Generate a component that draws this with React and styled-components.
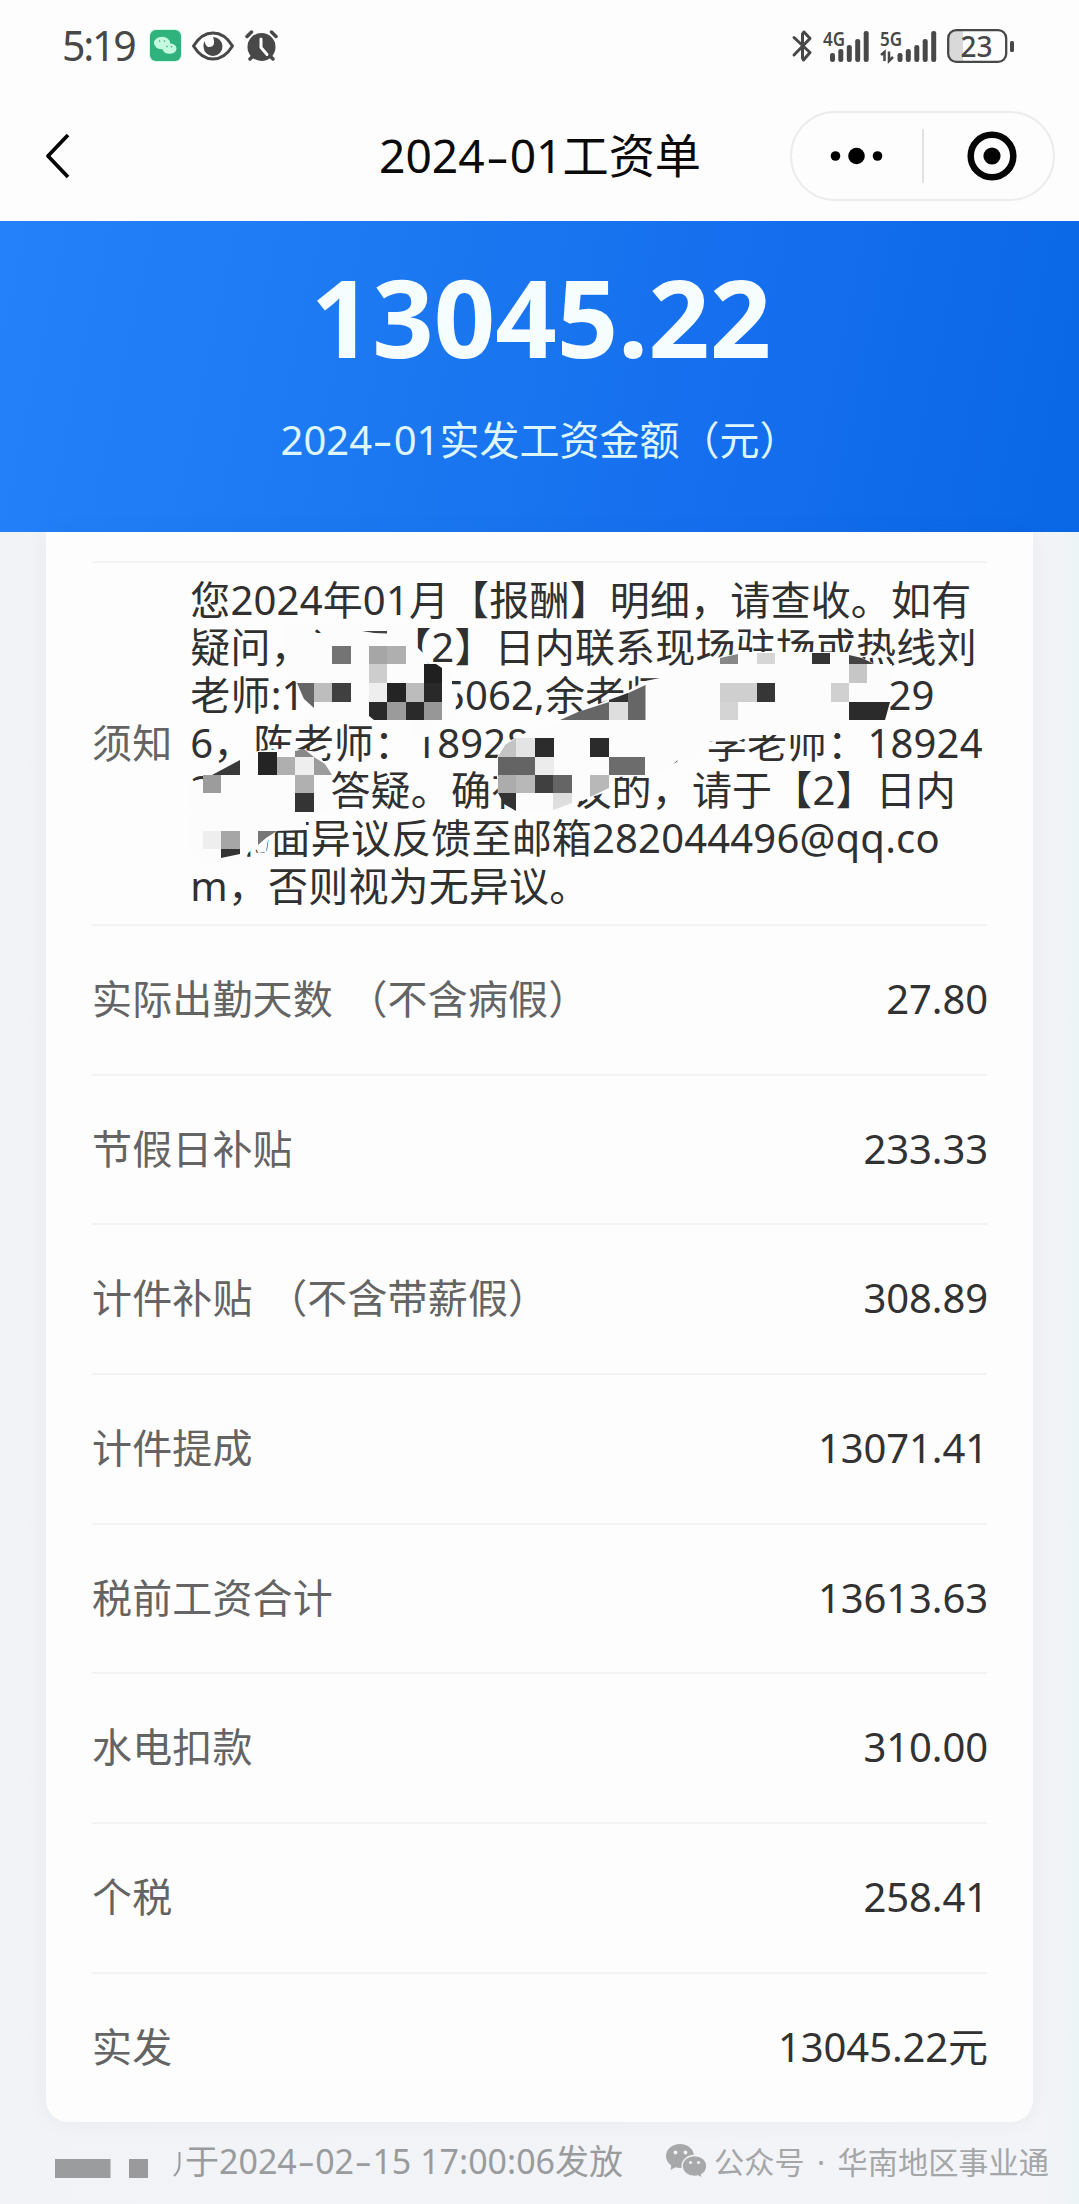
import React from "react";
import styled, { createGlobalStyle } from "styled-components";

const GlobalStyle = createGlobalStyle`
  * { box-sizing: border-box; }
  body {
    margin: 0;
    background: #f2f3f6;
    font-family: "Noto Sans", "Noto Sans CJK SC", sans-serif;
  }
`;

const Page = styled.div`
  width: 1079px;
  height: 2204px;
  overflow: hidden;
  display: flex;
  flex-direction: column;
  background: linear-gradient(90deg, #f1f3f6 0, #f3f4f7 96%, #edf4f5 100%);
`;

const StatusBar = styled.div`
  height: 91px;
  flex: none;
  display: flex;
  justify-content: space-between;
  align-items: center;
  padding: 0 65px 0 62px;
  background: #fdfdfd;
  color: #484848;
`;

const StatusGroup = styled.div`
  display: flex;
  align-items: center;
  gap: ${(p) => p.$gap}px;
`;

const Clock = styled.span`
  width: 77px;
  font-size: 41px;
  line-height: 46px;
  height: 48px;
  letter-spacing: -2.2px;
  white-space: nowrap;
`;

const Icon = styled.svg`
  display: block;
  flex: none;
  overflow: visible;
`;

const NavBar = styled.div`
  height: 130px;
  flex: none;
  display: grid;
  grid-template-columns: 379px 411px 265px;
  align-items: center;
  background: #fdfdfd;
`;

const BackButton = styled.div`
  padding-left: 45px;
`;

const Title = styled.div`
  font-size: 46.2px;
  line-height: 60px;
  color: #0a0a0a;
  white-space: nowrap;
`;

const Capsule = styled.div`
  height: 90px;
  border: 2px solid #ececec;
  border-radius: 45px;
  display: flex;
  align-items: center;
  justify-content: space-between;
  padding: 0 36px 0 37px;
`;

const CapsuleDivider = styled.div`
  width: 2px;
  height: 54px;
  margin-right: 4px;
  background: #e2e2e2;
`;

const DashBox = styled.span`
  display: inline-block;
  width: 0.54em;
  text-align: center;
  transform: scaleX(1.55);
`;

const Hero = styled.div`
  height: 311px;
  flex: none;
  display: flex;
  flex-direction: column;
  align-items: center;
  padding-top: 40px;
  background: linear-gradient(102deg, #2481f9 0%, #1b78f0 38%, #156eee 68%, #0967e6 100%);
`;

const Amount = styled.div`
  font-size: 107.5px;
  line-height: 110px;
  font-weight: 700;
  color: #f6fdff;
  padding-left: 3px;
`;

const AmountLabel = styled.div`
  margin-top: 41px;
  padding-left: 1px;
  font-size: 40px;
  line-height: 56px;
  color: #def6ff;
  white-space: nowrap;
`;

const Card = styled.div`
  width: 987px;
  height: 1590px;
  flex: none;
  margin-left: 46px;
  padding: 29px 46px 0;
  background: #fdfdfd;
  border-radius: 0 0 22px 22px;
  box-shadow: 0 0 22px rgba(60, 60, 70, 0.05);
`;

const Notice = styled.div`
  position: relative;
  height: 363px;
  border-top: 2px solid #f4f4f4;
  display: flex;
  align-items: center;
  padding-bottom: 2px;
`;

const Label = styled.div`
  font-size: 40px;
  line-height: 48px;
  letter-spacing: 0.15px;
  word-spacing: 4px;
  color: #646464;
  white-space: pre;
`;

const NoticeBody = styled.div`
  margin-left: 18px;
  letter-spacing: 0.17px;
  color: #303030;
`;

const Line = styled.div`
  height: 47.7px;
  font-size: 40px;
  line-height: 47.7px;
  white-space: nowrap;
`;

const Gap = styled.span`
  display: inline-block;
  width: ${(p) => p.$w}px;
`;

const Redaction = styled.svg`
  position: absolute;
  left: -92px;
  top: -2px;
  width: 1079px;
  height: 363px;
  pointer-events: none;
`;

const Row = styled.div`
  height: 149.7px;
  border-top: 2px solid #f3f3f3;
  padding-bottom: 2px;
  display: flex;
  align-items: center;
  justify-content: space-between;
`;

const Value = styled.div`
  font-size: 40px;
  line-height: 48px;
  letter-spacing: -0.1px;
  color: #323232;
  margin-right: -1px;
`;

const Footer = styled.div`
  flex: 1;
  display: flex;
  align-items: flex-start;
  padding: 14px 0 0 55px;
`;

const Issued = styled.div`
  width: 438px;
  font-size: 34px;
  line-height: 50px;
  color: #999b9d;
  white-space: nowrap;
`;

const Watermark = styled.div`
  display: flex;
  align-items: center;
  gap: 7px;
  height: 49px;
  margin-left: 43px;
  font-size: 30.2px;
  color: #a4a6a8;
  white-space: nowrap;
  font-family: "Noto Sans CJK SC", sans-serif;
`;

const MidDot = styled.span`
  display: inline-block;
  width: 33px;
  text-align: center;
  font-family: "Noto Sans", sans-serif;
`;

const Dash = () => <DashBox>-</DashBox>;

const rows = [
  ["实际出勤天数 （不含病假）", "27.80"],
  ["节假日补贴", "233.33"],
  ["计件补贴 （不含带薪假）", "308.89"],
  ["计件提成", "13071.41"],
  ["税前工资合计", "13613.63"],
  ["水电扣款", "310.00"],
  ["个税", "258.41"],
  ["实发", "13045.22元"],
];

const smears = [
  "285,624 314,624 314,633 321,633 324,624 413,624 416,646 424,654 430,668 452,672 452,684 458,690 454,722 296,722 314,708 297,683 285,672",
  "560,721 626,692 645,681 665,677 668,672 700,665 722,656 750,652 850,652 875,664 892,664 890,682 885,721",
  "190,784 196,780 204,780 210,775 222,770 245,757 258,751 290,748 318,752 331,775 331,813 190,813",
  "190,815 306,815 306,830 277,831 268,840 266,852 258,853 256,848 249,852 243,862 200,862 198,853 190,853",
  "413,722 432,722 432,736 420,738 413,738",
  "496,760 503,744 525,733 560,722 835,722 835,735 745,735 742,740 705,742 690,760 650,776 612,777 612,790 575,803 555,813 515,813 498,795",
];

const cells = [
  [332, 646, 19, 18, "#747474"], [369, 646, 18, 18, "#a6a6a6"], [387, 646, 19, 18, "#afafaf"],
  [369, 664, 18, 19, "#cdcdcd"], [369, 683, 18, 19, "#eeeeee"], [387, 683, 19, 19, "#242424"],
  [406, 683, 18, 19, "#bcbcbc"], [424, 683, 18, 19, "#292929"], [387, 702, 19, 18, "#9b9b9b"],
  [406, 702, 18, 18, "#2a2a2a"], [424, 702, 18, 18, "#979797"], [314, 683, 18, 19, "#bdbdbd"],
  [332, 683, 19, 19, "#404040"],
  [757, 653, 18, 11, "#d6d6d6"], [812, 653, 18, 11, "#343434"], [849, 664, 18, 19, "#c6c6c6"],
  [720, 683, 37, 19, "#cfcfcf"], [757, 683, 18, 19, "#363636"], [720, 702, 18, 18, "#d4d4d4"],
  [831, 683, 18, 19, "#d0d0d0"],
  [203, 775, 18, 18, "#9c9c9c"], [258, 752, 19, 23, "#242424"], [277, 757, 18, 18, "#afafaf"],
  [295, 757, 19, 18, "#eeeeee"], [295, 775, 19, 18, "#b0b0b0"], [295, 793, 19, 19, "#343434"],
  [203, 831, 18, 18, "#eeeeee"], [221, 831, 19, 18, "#a6a6a6"],
  [516, 738, 19, 19, "#e4e4e4"], [535, 738, 19, 19, "#2c2c2c"], [498, 757, 37, 18, "#646464"],
  [535, 757, 19, 18, "#ececec"], [498, 775, 18, 18, "#acacac"], [516, 775, 19, 18, "#b8b8b8"],
  [535, 775, 18, 18, "#404040"], [553, 775, 19, 18, "#656565"],
  [590, 738, 19, 19, "#2b2b2b"], [609, 757, 36, 18, "#6c6c6c"],
];

const shards = [
  ["362,631 387,631 387,633.5 374,633", "#444"],
  ["297,683 314,683 314,708 304,699", "#666"],
  ["424,664 436,664 442,668 442,683 424,683", "#202020"],
  ["369,702 387,702 387,720 374,720 369,716", "#2a2a2a"],
  ["720,658 738,654 738,664 720,664", "#888"],
  ["849,655 862,658 874,664 849,664", "#444"],
  ["849,702 890,702 885,720 849,720", "#2b2b2b"],
  ["560,720 578,712 609,702 645.5,685 645.5,720", "#666"],
  ["609,702 609,700 628,693 628,702", "#333"],
  ["609,702 628,702 628,720 609,720", "#dedede"],
  ["212,775 240,760 240,775", "#3a3a3a"],
  ["295,757 295,751 304,749 314,757", "#888"],
  ["314,757 325,764 332,775 314,775", "#9c9c9c"],
  ["221,849 240,849 240,854 221,858", "#333"],
  ["258,831 277,831 266,838 258,845", "#777"],
  ["498,757 505,745 516,738 516,757", "#c4c4c4"],
  ["498,793 516,793 516,811 504,804", "#333"],
  ["553,793 572,793 572,803 553,810", "#dedede"],
  ["590,775 609,775 609,788 590,797", "#b8b8b8"],
  ["673,764 678,760 677,762", "#555"],
];

const Mosaic = () => (
  <Redaction viewBox="0 561 1079 363">
    {smears.map((p) => (
      <polygon key={p} points={p} fill="#fcfcfc" />
    ))}
    {cells.map(([x, y, w, h, c]) => (
      <rect key={`${x}-${y}`} x={x} y={y} width={w} height={h} fill={c} />
    ))}
    {shards.map(([p, c]) => (
      <polygon key={p} points={p} fill={c} />
    ))}
  </Redaction>
);

const WeChatBadge = () => (
  <Icon width="31" height="31" viewBox="0 0 31 31">
    <rect x="-1" y="-1" width="33" height="33" rx="7" fill="#d3fbe9" />
    <rect width="31" height="31" rx="6" fill="#2fb27c" />
    <ellipse cx="12" cy="13" rx="8" ry="6.3" fill="#c4f8df" />
    <ellipse cx="19.5" cy="18.5" rx="7" ry="5.3" fill="#c4f8df" />
    <g fill="#2fb27c">
      <circle cx="9.5" cy="11" r="0.8" /><circle cx="14.5" cy="11" r="0.8" />
      <circle cx="17" cy="16.5" r="0.8" /><circle cx="21.5" cy="16.8" r="0.8" />
    </g>
  </Icon>
);

const Eye = () => (
  <Icon width="42" height="30" viewBox="0 0 42 30">
    <path d="M1.5 15C7 6 13.500 2 21 2s14 4 19.500 13C35 24 28.500 28 21 28S7 24 1.500 15Z" fill="none" stroke="#484848" strokeWidth="3" strokeLinejoin="round" />
    <path d="M21 6a9.500 9.500 0 1 1-9.500 10c-.3-3 .5-4.500 1.500-6 0 4 2 6 4.500 6 3.500 0 5-3 4.500-6-.2-1.800-.7-3-1-4Z" fill="#484848" />
  </Icon>
);

const Alarm = () => (
  <Icon width="33" height="31" viewBox="0 0 33 31">
    <circle cx="16.500" cy="17" r="14" fill="#484848" />
    <path d="M2 6.500 6.500 2M31 6.500 26.500 2M5 29l3-3M28 29l-3-3" stroke="#484848" strokeWidth="3.500" strokeLinecap="round" />
    <path d="M16 9v8.500l6 7" fill="none" stroke="#fdfdfd" strokeWidth="3" strokeLinecap="round" />
  </Icon>
);

const Bluetooth = () => (
  <Icon width="20" height="32" viewBox="0 0 20 32">
    <path d="M2 7.500 18 22.500 11.500 30 10.500 28V4L12 2 18 8.500 2 25" fill="none" stroke="#484848" strokeWidth="3" strokeLinejoin="round" strokeLinecap="round" />
  </Icon>
);

const bars = [[0, 9], [8.3, 13], [16.8, 17], [25.2, 23], [33.7, 31]];

const Signal = ({ label, offset, arrows }) => (
  <Icon width={offset + 39} height="32" viewBox={`0 0 ${offset + 39} 32`}>
    <text x="0" y="15.500" fontSize="20" fontWeight="600" textLength="22" lengthAdjust="spacingAndGlyphs" fill="#484848">{label}</text>
    {arrows && <path d="M1 25 4.500 22v9M9 21.500V31l4-4" fill="none" stroke="#484848" strokeWidth="2.500" />}
    {bars.map(([x, h]) => (
      <rect key={x} x={offset + x} y={32 - h} width="5" height={h} rx="2.300" fill="#484848" />
    ))}
  </Icon>
);

const Battery = () => (
  <Icon width="67" height="34" viewBox="0 0 67 34">
    <path d="M9 1.500h7v31H9a7.500 7.500 0 0 1-7.500-7.500V9A7.500 7.500 0 0 1 9 1.500Z" fill="#d9d9d9" />
    <rect x="1.200" y="1.200" width="58" height="31.600" rx="8" fill="none" stroke="#484848" strokeWidth="2.300" />
    <rect x="63" y="12" width="4" height="11" rx="1.500" fill="#484848" />
    <text x="13.500" y="27.500" fontSize="29" fontWeight="500" textLength="32" lengthAdjust="spacingAndGlyphs" fill="#484848">23</text>
  </Icon>
);

const WeChatMark = () => (
  <Icon width="41" height="36" viewBox="0 0 41 36">
    <path d="M14 1C6.200 1 0 6.200 0 13c0 3.800 2 7.200 5.200 9.400L4.500 27l5-2.700c1.600.5 3 .6 4.500.6C21.800 24.900 28 19.700 28 13S21.800 1 14 1Z" fill="#a6a8aa" />
    <path d="M28.500 12.500c-6.800 0-12.300 4.600-12.300 10.500s5.500 10.500 12.300 10.500c1.400 0 2.600-.2 3.800-.5l4.200 2.500-.9-3.900c3.200-1.900 5.200-5 5.200-8.600 0-5.900-5.500-10.500-12.300-10.500Z" fill="#a6a8aa" stroke="#f2f3f5" strokeWidth="1.400" />
    <g fill="#f2f3f5">
      <circle cx="9.500" cy="9.500" r="1.900" /><circle cx="19.500" cy="9.500" r="1.900" />
      <circle cx="24.500" cy="19.500" r="1.600" /><circle cx="32.500" cy="19.500" r="1.600" />
    </g>
  </Icon>
);

export default function App() {
  return (
    <Page>
      <GlobalStyle />
      <StatusBar>
        <StatusGroup $gap={11}>
          <Clock>5:19</Clock>
          <WeChatBadge />
          <Eye />
          <Alarm />
        </StatusGroup>
        <StatusGroup $gap={11}>
          <Bluetooth />
          <Signal label="4G" offset={7} />
          <Signal label="5G" offset={17.5} arrows />
          <Battery />
        </StatusGroup>
      </StatusBar>

      <NavBar>
        <BackButton>
          <Icon width="27" height="48" viewBox="0 0 27 48">
            <path d="M23 3 3 24 23 45" fill="none" stroke="#050505" strokeWidth="3.800" strokeLinejoin="round" />
          </Icon>
        </BackButton>
        <Title>2024<Dash />01工资单</Title>
        <Capsule>
          <Icon width="54" height="18" viewBox="0 0 54 18">
            <circle cx="6.500" cy="9" r="4.800" /><circle cx="27.500" cy="9" r="8.300" /><circle cx="48.500" cy="9" r="4.800" />
          </Icon>
          <CapsuleDivider />
          <Icon width="50" height="50" viewBox="0 0 50 50">
            <circle cx="25" cy="25" r="21.300" fill="none" stroke="#050505" strokeWidth="6.500" />
            <circle cx="25" cy="25" r="8.600" fill="#050505" />
          </Icon>
        </Capsule>
      </NavBar>

      <Hero>
        <Amount>13045.22</Amount>
        <AmountLabel>2024<Dash />01实发工资金额（元）</AmountLabel>
      </Hero>

      <Card>
        <Notice>
          <Label>须知</Label>
          <NoticeBody>
            <Line>您2024年01月【报酬】明细，请查收。如有</Line>
            <Line>疑问，请于【2】日内联系现场驻场或热线刘</Line>
            <Line>老师:1<Gap $w={137.3} />5062,余老师<Gap $w={223} />29</Line>
            <Line>6，陈老师：18928<Gap $w={177.3} />李老师：18924</Line>
            <Line>2<Gap $w={117} />答疑。确有异议的，请于【2】日内</Line>
            <Line>将书面异议反馈至邮箱282044496@qq.co</Line>
            <Line>m，否则视为无异议。</Line>
          </NoticeBody>
          <Mosaic />
        </Notice>
        {rows.map(([label, value]) => (
          <Row key={label}>
            <Label>{label}</Label>
            <Value>{value}</Value>
          </Row>
        ))}
      </Card>

      <Footer>
        <Icon width="130" height="50" viewBox="0 0 130 50">
          <rect x="0" y="23" width="55.500" height="19" fill="#9a9c9e" />
          <rect x="74" y="23" width="19" height="19" fill="#9a9a9c" />
          <path d="M124.500 16v12q0 7-5.500 12" fill="none" stroke="#999b9d" strokeWidth="2" />
        </Icon>
        <Issued>于2024<Dash />02<Dash />15 17:00:06发放</Issued>
        <Watermark>
          <WeChatMark />
          <span>公众号<MidDot>·</MidDot>华南地区事业通</span>
        </Watermark>
      </Footer>
    </Page>
  );
}
